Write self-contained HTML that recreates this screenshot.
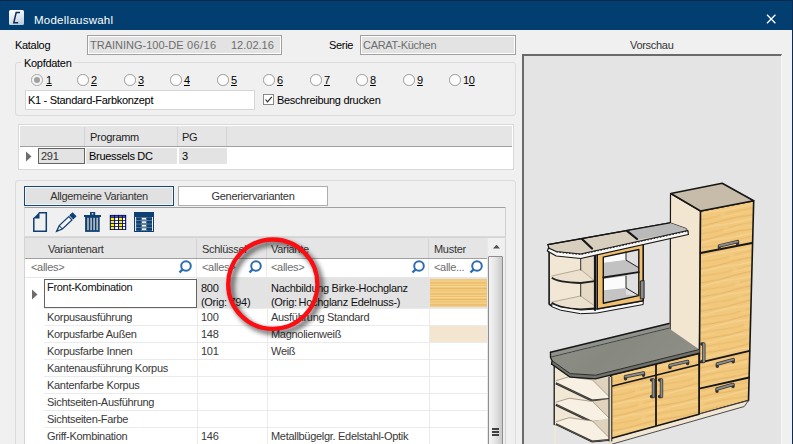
<!DOCTYPE html>
<html><head><meta charset="utf-8">
<style>
*{margin:0;padding:0;box-sizing:border-box}
html,body{width:793px;height:444px;overflow:hidden;background:#f0f0f0;font-family:"Liberation Sans",sans-serif;font-size:11px;color:#000}
.a{position:absolute}
.t{position:absolute;white-space:nowrap;line-height:13px;letter-spacing:-0.3px}
#title{left:0;top:0;width:793px;height:30px;background:#023f70;border-top:1px solid #0a2a4a}
.box{position:absolute;border:1px solid #a0a0a0;background:#e3e3e3;box-shadow:inset 0 0 0 1px #fff}
.grp{position:absolute;border:1px solid #dcdcdc;border-radius:3px}
.radio{position:absolute;width:11.5px;height:11.5px;border:1px solid #9a9a9a;border-radius:50%;background:#fcfcfc}
.u{text-decoration:underline}
.hl{position:absolute;background:#f0f0f0}
</style></head><body>
<div id="title" class="a"></div>
<div class="a" style="left:792px;top:0;width:1px;height:444px;background:#0b2d52"></div>
<!-- app icon -->
<div class="a" style="left:9px;top:10px;width:15px;height:15px;background:linear-gradient(160deg,#ffffff 10%,#dfe8f0 50%,#b3c8da);border-radius:1.5px"></div>
<svg class="a" style="left:9px;top:10px" width="15" height="15" viewBox="0 0 15 15"><path d="M11 2.6 H7.2 L4.8 12.7 H9.2" fill="none" stroke="#0d2c50" stroke-width="1.5"/></svg>
<div class="t" style="left:34px;top:14px;font-size:11.5px;color:#fff;letter-spacing:0.25px">Modellauswahl</div>
<svg class="a" style="left:766px;top:14px" width="11" height="10" viewBox="0 0 11 10"><path d="M1 0.8 L9.4 9.2 M9.4 0.8 L1 9.2" stroke="#fff" stroke-width="1.3"/></svg>

<!-- Katalog row -->
<div class="t" style="left:15px;top:39px">Katalog</div>
<div class="box" style="left:87px;top:35px;width:195px;height:20px"></div>
<div class="t" style="left:90px;top:39px;color:#6d6d6d;letter-spacing:0">TRAINING-100-DE</div><div class="t" style="left:187px;top:39px;color:#6d6d6d;letter-spacing:0.4px">06/16</div><div class="t" style="left:231px;top:39px;color:#6d6d6d;letter-spacing:0">12.02.16</div>
<div class="t" style="left:329px;top:39px">Serie</div>
<div class="box" style="left:360px;top:35px;width:156px;height:20px"></div>
<div class="t" style="left:363px;top:39px;color:#6d6d6d">CARAT-Küchen</div>

<!-- Kopfdaten group -->
<div class="grp" style="left:15px;top:62px;width:501px;height:54px"></div>
<div class="hl t" style="left:21px;top:57px;padding:0 3px">Kopfdaten</div>
<div class="radio" style="left:31px;top:74px;background:#f3f3f3;border-color:#a8a8a8"></div>
<div class="a" style="left:34px;top:77px;width:6px;height:6px;border-radius:50%;background:#a0a0a0"></div>
<div class="t u" style="left:46px;top:74px">1</div>
<div class="radio" style="left:77px;top:74px"></div><div class="t u" style="left:91px;top:74px">2</div>
<div class="radio" style="left:124px;top:74px"></div><div class="t u" style="left:138px;top:74px">3</div>
<div class="radio" style="left:170px;top:74px"></div><div class="t u" style="left:184px;top:74px">4</div>
<div class="radio" style="left:217px;top:74px"></div><div class="t u" style="left:231px;top:74px">5</div>
<div class="radio" style="left:263px;top:74px"></div><div class="t u" style="left:277px;top:74px">6</div>
<div class="radio" style="left:310px;top:74px"></div><div class="t u" style="left:324px;top:74px">7</div>
<div class="radio" style="left:356px;top:74px"></div><div class="t u" style="left:370px;top:74px">8</div>
<div class="radio" style="left:403px;top:74px"></div><div class="t u" style="left:417px;top:74px">9</div>
<div class="radio" style="left:449px;top:74px"></div><div class="t" style="left:463px;top:74px">1<span class="u">0</span></div>
<div class="a" style="left:25px;top:90px;width:230px;height:20px;background:#fff;border:1px solid #d5d5d5"></div>
<div class="t" style="left:28px;top:94px">K1 - Standard-Farbkonzept</div>
<div class="a" style="left:263px;top:94px;width:11px;height:11px;border:1px solid #8a8a8a;background:#fff"></div>
<svg class="a" style="left:263px;top:94px" width="11" height="11"><path d="M2.5 5.5 L4.5 7.8 L8.8 2.8" fill="none" stroke="#222" stroke-width="1.1"/></svg>
<div class="t" style="left:277px;top:94px">Beschreibung drucken</div>

<!-- Programm grid -->
<div class="a" style="left:18px;top:124px;width:496px;height:46px;background:#fff;border:1px solid #d8d8d8"></div>
<div class="a" style="left:20px;top:126px;width:492px;height:21px;background:#e5e5e5;border-bottom:1px solid #a0a0a0"></div>
<div class="a" style="left:84px;top:127px;width:1px;height:19px;background:#d3d3d3"></div>
<div class="a" style="left:177px;top:127px;width:1px;height:19px;background:#d3d3d3"></div>
<div class="a" style="left:226px;top:127px;width:1px;height:19px;background:#d3d3d3"></div>
<div class="t" style="left:90px;top:131px;color:#222">Programm</div>
<div class="t" style="left:182px;top:131px;color:#222">PG</div>
<div class="a" style="left:38px;top:148px;width:47px;height:16px;background:#e3e3e3;border:1px solid #646464"></div>
<div class="a" style="left:86px;top:148px;width:91px;height:16px;background:#e3e3e3"></div>
<div class="a" style="left:179px;top:148px;width:48px;height:16px;background:#e3e3e3"></div>
<svg class="a" style="left:25px;top:151px" width="8" height="11"><path d="M1 0.5 L6.5 5.5 L1 10.5Z" fill="#6d6d6d"/></svg>
<div class="t" style="left:41px;top:150px;color:#333">291</div>
<div class="t" style="left:89px;top:150px">Bruessels DC</div>
<div class="t" style="left:182px;top:150px">3</div>

<!-- Varianten group -->
<div class="grp" style="left:15px;top:180px;width:501px;height:280px"></div>
<div class="a" style="left:24px;top:186px;width:150px;height:20px;background:#e1e1e1;border:1px solid #15497a;box-shadow:inset 0 0 0 1px #f4f4f4"></div>
<div class="t" style="left:24px;top:190px;width:150px;text-align:center;color:#333">Allgemeine Varianten</div>
<div class="a" style="left:178px;top:186px;width:150px;height:20px;background:#fff;border:1px solid #adadad"></div>
<div class="t" style="left:178px;top:190px;width:150px;text-align:center;color:#333">Generiervarianten</div>
<div class="a" style="left:24px;top:207px;width:482px;height:30px;border-top:1px solid #a0a0a0;border-left:1px solid #dcdcdc;border-right:1px solid #cfcfcf;border-bottom:1px solid #dadada"></div>
<div id="icons"><svg class="a" style="left:28px;top:208px" width="130" height="28" viewBox="28 208 130 28">
<path d="M38.8 212.7 H46.3 V231.2 H33.8 V217.8" fill="none" stroke="#0d3f72" stroke-width="1.5"/>
<path d="M33.1 218.5 L39.5 212 V218.5Z" fill="#0d3f72"/>
<g transform="translate(56.3,231.6) rotate(-43.5)">
<path d="M0.4 0 L6.2 -2.3 H19.4 V2.3 H6.2 Z" fill="#f4f4f4" stroke="#0d3f72" stroke-width="1.25" stroke-linejoin="miter"/>
<path d="M6.2 -2.3 V2.3" stroke="#0d3f72" stroke-width="1"/>
<rect x="20.6" y="-2.9" width="4.6" height="5.8" fill="#0d3f72"/>
<path d="M0 0 L2.8 -1.1 V1.1Z" fill="#0d3f72"/>
</g>
<rect x="90" y="212" width="5.2" height="3.5" fill="#0d3f72"/>
<rect x="91.8" y="213.2" width="1.5" height="1.3" fill="#f0f0f0"/>
<rect x="84" y="215" width="17" height="2" fill="#0d3f72"/>
<rect x="85.1" y="216.9" width="14.6" height="15" fill="#0d3f72"/>
<rect x="87.1" y="217.8" width="1.8" height="12.4" fill="#a9b1b9"/>
<rect x="90.2" y="217.8" width="1.8" height="12.4" fill="#a9b1b9"/>
<rect x="93.2" y="217.8" width="1.8" height="12.4" fill="#a9b1b9"/>
<rect x="96.3" y="217.8" width="1.8" height="12.4" fill="#a9b1b9"/>
<rect x="109.8" y="214.9" width="16.4" height="15.1" fill="#000a78"/>
<path d="M111 216.3 H125" stroke="#7a7a7a" stroke-width="0.9" stroke-dasharray="3 1"/>
<rect x="110.8" y="217.8" width="3.3" height="2.2" fill="#ffee00"/>
<rect x="115.1" y="217.8" width="2.9" height="2.2" fill="#fff"/>
<rect x="119" y="217.8" width="3.1" height="2.2" fill="#ffee00"/>
<rect x="123" y="217.8" width="2.1" height="2.2" fill="#fff"/>
<rect x="110.8" y="220.8" width="3.3" height="2.2" fill="#ffee00"/>
<rect x="115.1" y="220.8" width="2.9" height="2.2" fill="#fff"/>
<rect x="119" y="220.8" width="3.1" height="2.2" fill="#ffee00"/>
<rect x="123" y="220.8" width="2.1" height="2.2" fill="#fff"/>
<rect x="110.8" y="223.9" width="3.3" height="2.2" fill="#ffee00"/>
<rect x="115.1" y="223.9" width="2.9" height="2.2" fill="#fff"/>
<rect x="119" y="223.9" width="3.1" height="2.2" fill="#ffee00"/>
<rect x="123" y="223.9" width="2.1" height="2.2" fill="#fff"/>
<rect x="110.8" y="226.9" width="3.3" height="2.2" fill="#ffee00"/>
<rect x="115.1" y="226.9" width="2.9" height="2.2" fill="#fff"/>
<rect x="119" y="226.9" width="3.1" height="2.2" fill="#ffee00"/>
<rect x="123" y="226.9" width="2.1" height="2.2" fill="#fff"/>
<rect x="134" y="212" width="20" height="20" fill="#0d3f72"/>
<rect x="135" y="217" width="18" height="14" fill="#5f7f9c"/>
<rect x="136" y="217.5" width="5.3" height="2.6" fill="#0d3f72"/><rect x="146.8" y="217.5" width="5.3" height="2.6" fill="#0d3f72"/><rect x="142" y="218.0" width="4" height="1.4" fill="#fff"/>
<rect x="136" y="221" width="5.3" height="2.6" fill="#0d3f72"/><rect x="146.8" y="221" width="5.3" height="2.6" fill="#0d3f72"/><rect x="142" y="221.5" width="4" height="1.4" fill="#fff"/>
<rect x="136" y="224.5" width="5.3" height="2.6" fill="#0d3f72"/><rect x="146.8" y="224.5" width="5.3" height="2.6" fill="#0d3f72"/><rect x="142" y="225.0" width="4" height="1.4" fill="#fff"/>
<rect x="136" y="228" width="5.3" height="2.6" fill="#0d3f72"/><rect x="146.8" y="228" width="5.3" height="2.6" fill="#0d3f72"/><rect x="142" y="228.5" width="4" height="1.4" fill="#fff"/>
<rect x="135.2" y="217" width="0.9" height="14" fill="#fff"/><rect x="152" y="217" width="0.9" height="14" fill="#fff"/>
</svg></div>

<!-- Main grid -->
<div class="a" style="left:24px;top:237px;width:482px;height:220px;background:#fff;border:1px solid #d3d3d3"></div>
<div id="grid">
<div class="a" style="left:25px;top:238px;width:462px;height:21px;background:#e5e5e5;border-bottom:1px solid #a0a0a0"></div>
<div class="a" style="left:196px;top:239px;width:1px;height:19px;background:#d3d3d3"></div>
<div class="a" style="left:266px;top:239px;width:1px;height:19px;background:#d3d3d3"></div>
<div class="a" style="left:428px;top:239px;width:1px;height:19px;background:#d3d3d3"></div>
<div class="t" style="left:48px;top:243px;color:#333">Variantenart</div>
<div class="t" style="left:202px;top:243px;color:#333">Schlüssel</div>
<div class="t" style="left:271px;top:243px;color:#333">Variante</div>
<div class="t" style="left:434px;top:243px;color:#333">Muster</div>
<div class="a" style="left:25px;top:277px;width:462px;height:1px;background:#e6e6e6"></div>
<div class="a" style="left:196px;top:259px;width:1px;height:18px;background:#ececec"></div>
<div class="a" style="left:266px;top:259px;width:1px;height:18px;background:#ececec"></div>
<div class="a" style="left:428px;top:259px;width:1px;height:18px;background:#ececec"></div>
<div class="t" style="left:31px;top:261px;color:#6d6d6d">&lt;alles&gt;</div>
<div class="t" style="left:202px;top:261px;color:#6d6d6d">&lt;alles&gt;</div>
<div class="t" style="left:271px;top:261px;color:#6d6d6d">&lt;alles&gt;</div>
<div class="t" style="left:434px;top:261px;color:#6d6d6d">&lt;alle...</div>
<svg class="a" style="left:178px;top:259px" width="14" height="16" viewBox="0 0 14 16"><circle cx="8" cy="7" r="4.8" fill="none" stroke="#2f6db3" stroke-width="2"/><path d="M4.6 10.4 L1.5 13.5" stroke="#2f6db3" stroke-width="2.4"/></svg>
<svg class="a" style="left:248px;top:259px" width="14" height="16" viewBox="0 0 14 16"><circle cx="8" cy="7" r="4.8" fill="none" stroke="#2f6db3" stroke-width="2"/><path d="M4.6 10.4 L1.5 13.5" stroke="#2f6db3" stroke-width="2.4"/></svg>
<svg class="a" style="left:411px;top:259px" width="14" height="16" viewBox="0 0 14 16"><circle cx="8" cy="7" r="4.8" fill="none" stroke="#2f6db3" stroke-width="2"/><path d="M4.6 10.4 L1.5 13.5" stroke="#2f6db3" stroke-width="2.4"/></svg>
<svg class="a" style="left:469px;top:259px" width="14" height="16" viewBox="0 0 14 16"><circle cx="8" cy="7" r="4.8" fill="none" stroke="#2f6db3" stroke-width="2"/><path d="M4.6 10.4 L1.5 13.5" stroke="#2f6db3" stroke-width="2.4"/></svg>
<div class="a" style="left:196px;top:278px;width:291px;height:30px;background:#e3e3e3"></div>
<div class="a" style="left:430px;top:279px;width:57px;height:28px;background:repeating-linear-gradient(180deg,#f4d08a 0px,#eebf6c 1px,#f6d795 2px,#f0c878 3px,#e9b966 4px,#f5d38f 5.5px)"></div>
<div class="a" style="left:430px;top:326px;width:57px;height:16px;background:#f3e5cf"></div>
<div class="a" style="left:44px;top:279px;width:153px;height:29px;background:#fff;border:1px solid #646464"></div>
<svg class="a" style="left:31px;top:289px" width="8" height="11"><path d="M1 0.5 L6.5 5.5 L1 10.5Z" fill="#6d6d6d"/></svg>
<div class="a" style="left:44px;top:308px;width:443px;height:1px;background:#ebebeb"></div>
<div class="a" style="left:44px;top:325px;width:443px;height:1px;background:#ebebeb"></div>
<div class="a" style="left:44px;top:342px;width:443px;height:1px;background:#ebebeb"></div>
<div class="a" style="left:44px;top:359px;width:443px;height:1px;background:#ebebeb"></div>
<div class="a" style="left:44px;top:376px;width:443px;height:1px;background:#ebebeb"></div>
<div class="a" style="left:44px;top:393px;width:443px;height:1px;background:#ebebeb"></div>
<div class="a" style="left:44px;top:410px;width:443px;height:1px;background:#ebebeb"></div>
<div class="a" style="left:44px;top:427px;width:443px;height:1px;background:#ebebeb"></div>
<div class="a" style="left:197px;top:308px;width:1px;height:140px;background:#ebebeb"></div>
<div class="a" style="left:267px;top:308px;width:1px;height:140px;background:#ebebeb"></div>
<div class="a" style="left:429px;top:308px;width:1px;height:140px;background:#ebebeb"></div>
<div class="t" style="left:47px;top:281px;color:#111">Front-Kombination</div>
<div class="t" style="left:201px;top:281px;color:#111;line-height:14px">800<br>(Orig: 794)</div>
<div class="t" style="left:271px;top:281px;color:#111;line-height:14px">Nachbildung Birke-Hochglanz<br>(Orig:&#8201;Hochglanz Edelnuss-)</div>
<div class="t" style="left:47px;top:311px;color:#383838">Korpusausführung</div>
<div class="t" style="left:201px;top:311px;color:#383838">100</div>
<div class="t" style="left:271px;top:311px;color:#383838">Ausführung Standard</div>
<div class="t" style="left:47px;top:328px;color:#383838">Korpusfarbe Außen</div>
<div class="t" style="left:201px;top:328px;color:#383838">148</div>
<div class="t" style="left:271px;top:328px;color:#383838">Magnolienweiß</div>
<div class="t" style="left:47px;top:345px;color:#383838">Korpusfarbe Innen</div>
<div class="t" style="left:201px;top:345px;color:#383838">101</div>
<div class="t" style="left:271px;top:345px;color:#383838">Weiß</div>
<div class="t" style="left:47px;top:362px;color:#383838">Kantenausführung Korpus</div>
<div class="t" style="left:47px;top:379px;color:#383838">Kantenfarbe Korpus</div>
<div class="t" style="left:47px;top:396px;color:#383838">Sichtseiten-Ausführung</div>
<div class="t" style="left:47px;top:413px;color:#383838">Sichtseiten-Farbe</div>
<div class="t" style="left:47px;top:430px;color:#383838">Griff-Kombination</div>
<div class="t" style="left:201px;top:430px;color:#383838">146</div>
<div class="t" style="left:271px;top:430px;color:#383838">Metallbügelgr. Edelstahl-Optik</div>
<div class="a" style="left:487px;top:238px;width:18px;height:210px;background:#f0f0f0;border-left:1px solid #e8e8e8"></div>
<svg class="a" style="left:491px;top:242px" width="11" height="8"><path d="M2 6.5 L5.5 2.8 L9 6.5Z" fill="#505050"/></svg>
<div class="a" style="left:488px;top:256px;width:15px;height:200px;border:1px solid #8e8e8e;border-radius:1px;background:linear-gradient(90deg,#f4f4f4,#e6e6e6 45%,#c9c9c9)"></div>
<div class="a" style="left:492px;top:428px;width:7px;height:2px;background:#404040"></div>
<div class="a" style="left:492px;top:431px;width:7px;height:2px;background:#404040"></div>
<div class="a" style="left:492px;top:434px;width:7px;height:2px;background:#404040"></div>
</div>

<svg class="a" style="left:200px;top:215px" width="150" height="140" viewBox="200 215 150 140">
<defs><filter id="sh" x="-20%" y="-20%" width="140%" height="140%"><feGaussianBlur stdDeviation="2.4"/></filter></defs>
<ellipse cx="276.3" cy="287.8" rx="44.6" ry="44.7" fill="none" stroke="#000" stroke-opacity="0.6" stroke-width="5" filter="url(#sh)"/>
<ellipse cx="272.8" cy="284.2" rx="44.6" ry="44.7" fill="none" stroke="#fb0d12" stroke-width="4.3"/>
</svg>
<!-- preview -->
<div class="t" style="left:630px;top:39px;color:#333">Vorschau</div>
<div class="a" style="left:522px;top:54px;width:260px;height:400px;background:#e4e4e4;border-top:2px solid #6a6a6a;border-left:2px solid #6a6a6a;border-right:1px solid #f6f6f6"></div>
<div id="kitchen"><svg class="a" style="left:0;top:0" width="793" height="444" viewBox="0 0 793 444">
<defs>
<clipPath id="pc"><rect x="524" y="56" width="257" height="388"/></clipPath>
<pattern id="wood" patternUnits="userSpaceOnUse" width="60" height="14" patternTransform="rotate(-12)">
<rect width="60" height="14" fill="#f2c87c"/>
<path d="M0 2 Q15 1 30 2.5 T60 2" stroke="#e4b366" stroke-width="1" fill="none"/>
<path d="M0 6 Q20 7 35 5.5 T60 6" stroke="#f7d595" stroke-width="1.2" fill="none"/>
<path d="M5 10 Q25 9 40 10.5 T60 10" stroke="#e8b86a" stroke-width="0.9" fill="none"/>
<path d="M0 12.5 Q12 12 30 13" stroke="#f5d08a" stroke-width="0.8" fill="none"/>
</pattern>
<linearGradient id="wt" x1="0" y1="0" x2="1" y2="0.3"><stop offset="0" stop-color="#8f9188"/><stop offset="0.5" stop-color="#878980"/><stop offset="1" stop-color="#8d8f86"/></linearGradient>
</defs>
<g clip-path="url(#pc)">
<polygon points="670.5,193.5 700.5,211 699,414 670,380" fill="#f3e6d0" stroke="#161616" stroke-width="1.2" stroke-linejoin="round" />
<polygon points="700.5,211 753.7,200.7 748.5,400.5 699,414.2" fill="url(#wood)" stroke="#161616" stroke-width="1.6" stroke-linejoin="round" />
<polygon points="670.8,193.5 722.2,183.2 753.7,200.7 700.5,211" fill="#c6bca9" stroke="#161616" stroke-width="1.6" stroke-linejoin="round" />
<polyline points="700.5,253 752,243" fill="none" stroke="#161616" stroke-width="1.8" stroke-linejoin="round" stroke-linecap="round"/>
<polyline points="700.5,362.3 749.5,350.8" fill="none" stroke="#161616" stroke-width="1.8" stroke-linejoin="round" stroke-linecap="round"/>
<polyline points="700.2,388.4 749.2,377.5" fill="none" stroke="#161616" stroke-width="1.8" stroke-linejoin="round" stroke-linecap="round"/>
<polyline points="719.5,248.0 719.5,245.8 737.5,241.6 737.5,243.79999999999998" fill="none" stroke="#333333" stroke-width="3.4" stroke-linejoin="round" stroke-linecap="round"/><polyline points="719.5,245.8 737.5,241.6" fill="none" stroke="#8c8c8c" stroke-width="1.9" stroke-linejoin="round" stroke-linecap="round"/>
<polyline points="717.3,366.2 717.3,364 733.2,359.6 733.2,361.8" fill="none" stroke="#333333" stroke-width="3.4" stroke-linejoin="round" stroke-linecap="round"/><polyline points="717.3,364 733.2,359.6" fill="none" stroke="#8c8c8c" stroke-width="1.9" stroke-linejoin="round" stroke-linecap="round"/>
<polyline points="717,391.2 717,389 733,384.4 733,386.59999999999997" fill="none" stroke="#333333" stroke-width="3.4" stroke-linejoin="round" stroke-linecap="round"/><polyline points="717,389 733,384.4" fill="none" stroke="#8c8c8c" stroke-width="1.9" stroke-linejoin="round" stroke-linecap="round"/>
<polyline points="701.8,344 703.8,344 703.8,361.5 701.8,361.5" fill="none" stroke="#333333" stroke-width="3.4" stroke-linejoin="round" stroke-linecap="round"/><polyline points="703.8,344 703.8,361.5" fill="none" stroke="#8c8c8c" stroke-width="1.9" stroke-linejoin="round" stroke-linecap="round"/>
<polygon points="610.7,438.4 748.5,400.5 744.3,406.5 610.7,444.5" fill="#f0e6d3" stroke="#3a3a3a" stroke-width="0.9" stroke-linejoin="round" />
<polygon points="610.7,375.3 699,353.5 699,414.2 610.7,438.4" fill="url(#wood)" stroke="#161616" stroke-width="1.6" stroke-linejoin="round" />
<polyline points="610.7,386.5 699,364.5" fill="none" stroke="#161616" stroke-width="1.8" stroke-linejoin="round" stroke-linecap="round"/>
<polyline points="656,364.5 656,425" fill="none" stroke="#161616" stroke-width="1.8" stroke-linejoin="round" stroke-linecap="round"/>
<polyline points="625.5,378.8 625.5,376.6 643.5,373 643.5,375.2" fill="none" stroke="#333333" stroke-width="3.4" stroke-linejoin="round" stroke-linecap="round"/><polyline points="625.5,376.6 643.5,373" fill="none" stroke="#8c8c8c" stroke-width="1.9" stroke-linejoin="round" stroke-linecap="round"/>
<polyline points="670,367.59999999999997 670,365.4 687.6,361.4 687.6,363.59999999999997" fill="none" stroke="#333333" stroke-width="3.4" stroke-linejoin="round" stroke-linecap="round"/><polyline points="670,365.4 687.6,361.4" fill="none" stroke="#8c8c8c" stroke-width="1.9" stroke-linejoin="round" stroke-linecap="round"/>
<polyline points="651.5,380 653.5,380 653.5,396.5 651.5,396.5" fill="none" stroke="#333333" stroke-width="3.4" stroke-linejoin="round" stroke-linecap="round"/><polyline points="653.5,380 653.5,396.5" fill="none" stroke="#8c8c8c" stroke-width="1.9" stroke-linejoin="round" stroke-linecap="round"/>
<polyline points="659.5,380 661.5,380 661.5,396.5 659.5,396.5" fill="none" stroke="#333333" stroke-width="3.4" stroke-linejoin="round" stroke-linecap="round"/><polyline points="661.5,380 661.5,396.5" fill="none" stroke="#8c8c8c" stroke-width="1.9" stroke-linejoin="round" stroke-linecap="round"/>
<polygon points="554,362 596,378 611,377 611,446 554,446" fill="#f1e7d5"  />
<path d="M609.2,377.5 L609.2,396.7 L592.5,380Z" fill="#e0d3bd"/>
<path d="M555.8,380.8 L569.2,376.7 L592.5,380.0 L609.2,396.7 L609.2,399.2 L592,400.8 Z" fill="#f8f0e3"/>
<path d="M555.8,380.8 L569.2,376.7 L592.5,380.0 L609.2,396.7" fill="none" stroke="#9a8c76" stroke-width="0.8"/>
<path d="M555.8,383.25 L592,400.65 L609.2,399.05" fill="none" stroke="#2a2a2a" stroke-width="2.3"/>
<path d="M556.5,383.4 L592,400.5 L609.2,398.9" fill="none" stroke="#8a8070" stroke-width="0.5"/>
<path d="M609.2,399.0 L609.2,418.2 L592.5,401.5Z" fill="#e0d3bd"/>
<path d="M555.8,402.3 L569.2,398.2 L592.5,401.5 L609.2,418.2 L609.2,420.7 L592,422.3 Z" fill="#f8f0e3"/>
<path d="M555.8,402.3 L569.2,398.2 L592.5,401.5 L609.2,418.2" fill="none" stroke="#9a8c76" stroke-width="0.8"/>
<path d="M555.8,404.75 L592,422.15 L609.2,420.55" fill="none" stroke="#2a2a2a" stroke-width="2.3"/>
<path d="M556.5,404.9 L592,422.0 L609.2,420.4" fill="none" stroke="#8a8070" stroke-width="0.5"/>
<path d="M609.2,418.5 L609.2,437.7 L592.5,421Z" fill="#e0d3bd"/>
<path d="M555.8,421.8 L569.2,417.7 L592.5,421.0 L609.2,437.7 L609.2,440.2 L592,441.8 Z" fill="#f8f0e3"/>
<path d="M555.8,421.8 L569.2,417.7 L592.5,421.0 L609.2,437.7" fill="none" stroke="#9a8c76" stroke-width="0.8"/>
<path d="M555.8,424.25 L592,441.65 L609.2,440.05" fill="none" stroke="#2a2a2a" stroke-width="2.3"/>
<path d="M556.5,424.4 L592,441.5 L609.2,439.9" fill="none" stroke="#8a8070" stroke-width="0.5"/>
<path d="M555.8,425.3 L592,442.7 L609.2,441.1 L609.2,446 L555.8,446Z" fill="#e4e4e4"/>
<polyline points="554.2,362 554.2,424.5" fill="none" stroke="#161616" stroke-width="1.3" stroke-linejoin="round" stroke-linecap="round"/>
<rect x="608.8" y="377" width="3.2" height="69" fill="#e6dac4"/>
<polyline points="609,377 609,441" fill="none" stroke="#161616" stroke-width="1.0" stroke-linejoin="round" stroke-linecap="round"/>
<polyline points="611.8,377 611.8,441" fill="none" stroke="#161616" stroke-width="1.0" stroke-linejoin="round" stroke-linecap="round"/>
<polygon points="550.5,357.5 669.1,328.5 699.4,349.5 595.5,375.2 570.2,373.6 552.1,360.7" fill="url(#wt)"  />
<polygon points="550.5,352.3 669.1,323.5 669.1,328.5 550.5,357.5" fill="#8f918b"  />
<polyline points="550.5,352.3 669.1,323.5" fill="none" stroke="#161616" stroke-width="1.5" stroke-linejoin="round" stroke-linecap="round"/>
<polyline points="550.5,357.2 669.1,328.2" fill="none" stroke="#3a3a3a" stroke-width="0.9" stroke-linejoin="round" stroke-linecap="round"/>
<polygon points="552.1,360.7 570.2,373.6 595.5,375.2 699.4,349.5 699.4,353.2 595.5,378.9 570.2,377.2 551.5,364" fill="#6f716b"  />
<polyline points="552.1,360.7 570.2,373.6 595.5,375.2 699.4,349.5" fill="none" stroke="#2a2a2a" stroke-width="1.0" stroke-linejoin="round" stroke-linecap="round"/>
<polyline points="551.5,364 570.2,377.2 595.5,378.9 699.4,353.2" fill="none" stroke="#161616" stroke-width="1.3" stroke-linejoin="round" stroke-linecap="round"/>
<polyline points="550.5,352.3 550.5,357.5 552.1,360.7 551.5,364" fill="none" stroke="#161616" stroke-width="1.3" stroke-linejoin="round" stroke-linecap="round"/>
<polygon points="549.1,249 580.7,255 595,254 595,312 551.8,306" fill="#f2e7d4"  />
<path d="M580.7,255 L595,254 L595,309 L580.7,309 Z" fill="#e6dac4"/>
<polygon points="551.8,276 580.7,269.5 594.8,281 594.8,281.2 580.7,283 560.5,281.2 551.8,277.7" fill="#ebe1ce"  />
<polyline points="551.8,276 580.7,269.5 594.8,281" fill="none" stroke="#a89a84" stroke-width="0.8" stroke-linejoin="round" stroke-linecap="round"/>
<path d="M551.8,277.7 C555,280.2 565,282.5 580.7,283 L594.8,281.2" fill="none" stroke="#222" stroke-width="1.8"/>
<polygon points="551.8,302 580.7,296 594.8,306 594.8,308.4 580.7,309.3 560.5,306.3 551.8,302.8" fill="#ebe1ce"  />
<polyline points="551.8,302 580.7,296 594.8,306" fill="none" stroke="#a89a84" stroke-width="0.8" stroke-linejoin="round" stroke-linecap="round"/>
<path d="M551.8,302.8 C555,305.3 565,308.8 580.7,309.3 L594.8,308.4" fill="none" stroke="#222" stroke-width="1.8"/>
<polyline points="580.7,255 580.7,270" fill="none" stroke="#333" stroke-width="1.0" stroke-linejoin="round" stroke-linecap="round"/>
<polyline points="580.7,284 580.7,296" fill="none" stroke="#333" stroke-width="1.0" stroke-linejoin="round" stroke-linecap="round"/>
<polyline points="549.1,249 549.1,304 551.8,306" fill="none" stroke="#161616" stroke-width="1.6" stroke-linejoin="round" stroke-linecap="round"/>
<polygon points="551.8,303.5 560.5,307 580.7,310 597,309 643.2,300.8 643.2,304.5 597,313 580.7,313.7 560.5,310.2 551.8,306.7" fill="#f6f6f6" stroke="#161616" stroke-width="1.0" stroke-linejoin="round" />
<polygon points="597.2,252.1 643.2,243.7 643.2,300.8 597.2,309" fill="#f0c070" stroke="#161616" stroke-width="1.6" stroke-linejoin="round" />
<polyline points="595,254 595,310" fill="none" stroke="#161616" stroke-width="2.2" stroke-linejoin="round" stroke-linecap="round"/>
<polygon points="603.3,257.1 638.8,249.5 638.8,295.6 603.3,303.2" fill="#c4c4c4"  />
<polygon points="626,251.8 638.8,249.5 638.8,295.6 626,294.8" fill="#e0e0e0"  />
<polygon points="603.3,257.1 626,252.5 626,260.1 603.3,263.1" fill="#fbfbfb"  />
<polygon points="603.3,279 626,276 626,288 603.3,290.3" fill="#fbfbfb"  />
<polygon points="603.3,263.1 626,260.1 638.8,267.7 638.8,272.2 603.3,277.5" fill="#c2c2c2"  />
<polyline points="626,251.8 626,260.1 638.8,267.7" fill="none" stroke="#222" stroke-width="1.0" stroke-linejoin="round" stroke-linecap="round"/>
<polyline points="626,276 626,288 638.8,295.6" fill="none" stroke="#222" stroke-width="1.0" stroke-linejoin="round" stroke-linecap="round"/>
<polyline points="603.3,277.5 638.8,272.2" fill="none" stroke="#1a1a1a" stroke-width="1.8" stroke-linejoin="round" stroke-linecap="round"/>
<polygon points="603.3,257.1 638.8,249.5 638.8,295.6 603.3,303.2" fill="none" stroke="#161616" stroke-width="1.4" stroke-linejoin="round" />
<polygon points="640.3,281 644.1,280.5 644.1,298.6 640.3,299" fill="#8c8c8c" stroke="#161616" stroke-width="0.9" stroke-linejoin="round" />
<polygon points="547.8,244.6 669.8,222.8 685.9,228.5 687.8,231.3 580.7,254.9 556.2,252.3 549.1,248.8" fill="#d8cebd" stroke="#161616" stroke-width="1.2" stroke-linejoin="round" />
<polygon points="627,230.8 669.8,222.8 685.9,228.5 687.8,231.3 637,239.5" fill="#b9b9b9"  />
<polyline points="582,239 592,248.5" fill="none" stroke="#161616" stroke-width="2.2" stroke-linejoin="round" stroke-linecap="round"/>
<polyline points="627,230.8 637,239" fill="none" stroke="#161616" stroke-width="2.2" stroke-linejoin="round" stroke-linecap="round"/>
<polyline points="547.8,244.6 669.8,222.8" fill="none" stroke="#161616" stroke-width="1.3" stroke-linejoin="round" stroke-linecap="round"/>
<polygon points="548.5,248 556.2,251.5 580.7,254 687.8,230.5 688.4,234.5 580.7,258.5 556.2,256 547.4,251" fill="#f8f8f8" stroke="#161616" stroke-width="1.2" stroke-linejoin="round" />
<polyline points="556.2,252 580.7,254.5 687,231.2" fill="none" stroke="#2a2a2a" stroke-width="1.2" stroke-dasharray="1.6 1.6"/>
</g></svg></div>

</body></html>
